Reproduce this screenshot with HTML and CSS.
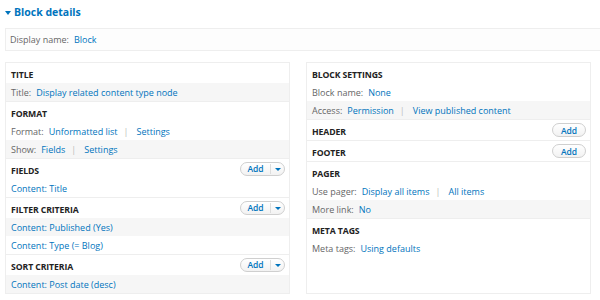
FILE: index.html
```html
<!DOCTYPE html>
<html>
<head>
<meta charset="utf-8">
<link rel="stylesheet" href="styles.css">
</head>
<body>
<div class="details-title"><span class="caret"></span>Block details</div>
<div class="display-box"><span class="label">Display name:</span><a class="link">Block</a></div>
<div class="columns">
  <div class="col col-left">
    <div class="section first">
      <div class="sec-head"><span class="sec-title">TITLE</span></div>
      <div class="row grey"><span class="label">Title:</span><a class="link">Display related content type node</a></div>
    </div>
    <div class="section">
      <div class="sec-head"><span class="sec-title">FORMAT</span></div>
      <div class="row"><span class="label">Format:</span><a class="link">Unformatted list</a><span class="pipe">|</span><a class="link">Settings</a></div>
      <div class="row grey"><span class="label">Show:</span><a class="link">Fields</a><span class="pipe">|</span><a class="link">Settings</a></div>
    </div>
    <div class="section">
      <div class="sec-head"><span class="sec-title">FIELDS</span><span class="btn drop"><span class="btn-text">Add</span><span class="btn-caret"><span class="tri"></span></span></span></div>
      <div class="row"><a class="link">Content: Title</a></div>
    </div>
    <div class="section">
      <div class="sec-head"><span class="sec-title">FILTER CRITERIA</span><span class="btn drop"><span class="btn-text">Add</span><span class="btn-caret"><span class="tri"></span></span></span></div>
      <div class="row grey"><a class="link">Content: Published (Yes)</a></div>
      <div class="row"><a class="link">Content: Type (= Blog)</a></div>
    </div>
    <div class="section">
      <div class="sec-head"><span class="sec-title">SORT CRITERIA</span><span class="btn drop"><span class="btn-text">Add</span><span class="btn-caret"><span class="tri"></span></span></span></div>
      <div class="row grey"><a class="link">Content: Post date (desc)</a></div>
    </div>
  </div>
  <div class="col col-right">
    <div class="section first">
      <div class="sec-head"><span class="sec-title">BLOCK SETTINGS</span></div>
      <div class="row"><span class="label">Block name:</span><a class="link">None</a></div>
      <div class="row grey"><span class="label">Access:</span><a class="link">Permission</a><span class="pipe">|</span><a class="link">View published content</a></div>
    </div>
    <div class="section">
      <div class="sec-head"><span class="sec-title">HEADER</span><span class="btn single"><span class="btn-text">Add</span></span></div>
    </div>
    <div class="section">
      <div class="sec-head"><span class="sec-title">FOOTER</span><span class="btn single"><span class="btn-text">Add</span></span></div>
    </div>
    <div class="section">
      <div class="sec-head"><span class="sec-title">PAGER</span></div>
      <div class="row"><span class="label">Use pager:</span><a class="link">Display all items</a><span class="pipe">|</span><a class="link">All items</a></div>
      <div class="row grey"><span class="label">More link:</span><a class="link">No</a></div>
    </div>
    <div class="section">
      <div class="sec-head"><span class="sec-title">META TAGS</span></div>
      <div class="row"><span class="label">Meta tags:</span><a class="link">Using defaults</a></div>
    </div>
  </div>
</div>
</body>
</html>
```
FILE: styles.css
```css
html, body {
  margin: 0;
  padding: 0;
  background: #fff;
}
body {
  font-family: "Open Sans", "Liberation Sans", sans-serif;
  font-size: 9px;
  color: #555;
  width: 600px;
  height: 300px;
  overflow: hidden;
}
.details-title {
  height: 24px;
  line-height: 24px;
  padding-left: 5px;
  font-size: 10.5px;
  font-weight: bold;
  color: #0074bd;
  display: flex;
  align-items: center;
}
.caret {
  width: 0;
  height: 0;
  border-left: 3.5px solid transparent;
  border-right: 3.5px solid transparent;
  border-top: 4px solid #0074bd;
  margin-right: 3px;
  margin-top: 1px;
}
.display-box {
  margin: 4px 0 0 5px;
  height: 21px;
  border-top: 1px solid #eee;
  border-bottom: 1px solid #eee;
  border-left: 1px solid #eee;
  background: #fdfdfd;
  display: flex;
  align-items: center;
  padding-left: 4px;
}
.label {
  color: #666;
  margin-right: 5px;
}
.link {
  color: #0074bd;
}
.pipe {
  color: #bbb;
  margin: 0 8px 0 6px;
}
.columns {
  display: flex;
  padding: 11px 0 0 5px;
  gap: 16px;
}
.col {
  border: 1px solid #eee;
  box-sizing: border-box;
}
.col-left {
  width: 285px;
}
.col-right {
  width: 285px;
}
.section {
  border-top: 1px solid #eee;
}
.section.first {
  border-top: none;
}
.sec-head {
  height: 20px;
  display: flex;
  align-items: center;
  justify-content: space-between;
  padding: 0 4px 0 5px;
}
.sec-title {
  font-weight: bold;
  color: #222;
  font-size: 8.7px;
  letter-spacing: -0.1px;
  margin-top: 3px;
}
.row {
  height: 18px;
  display: flex;
  align-items: center;
  padding-left: 5px;
  background: #fff;
}
.row.grey {
  background: #f6f6f6;
}
.btn {
  height: 14px;
  box-sizing: border-box;
  border: 1px solid #cfcfcf;
  border-radius: 7px;
  background: linear-gradient(#fff, #f2f2f2);
  display: flex;
  align-items: center;
  color: #0074bd;
  font-size: 8.5px;
  font-weight: 600;
}
.btn.single {
  width: 34px;
  justify-content: center;
}
.btn.drop {
  width: 45px;
}
.btn.drop .btn-text {
  width: 29px;
  text-align: center;
  border-right: 1px solid #ddd;
  line-height: 10px;
}
.btn-caret {
  flex: 1;
  display: flex;
  justify-content: center;
  align-items: center;
}
.tri {
  width: 0;
  height: 0;
  border-left: 3px solid transparent;
  border-right: 3px solid transparent;
  border-top: 3px solid #0074bd;
}
```
